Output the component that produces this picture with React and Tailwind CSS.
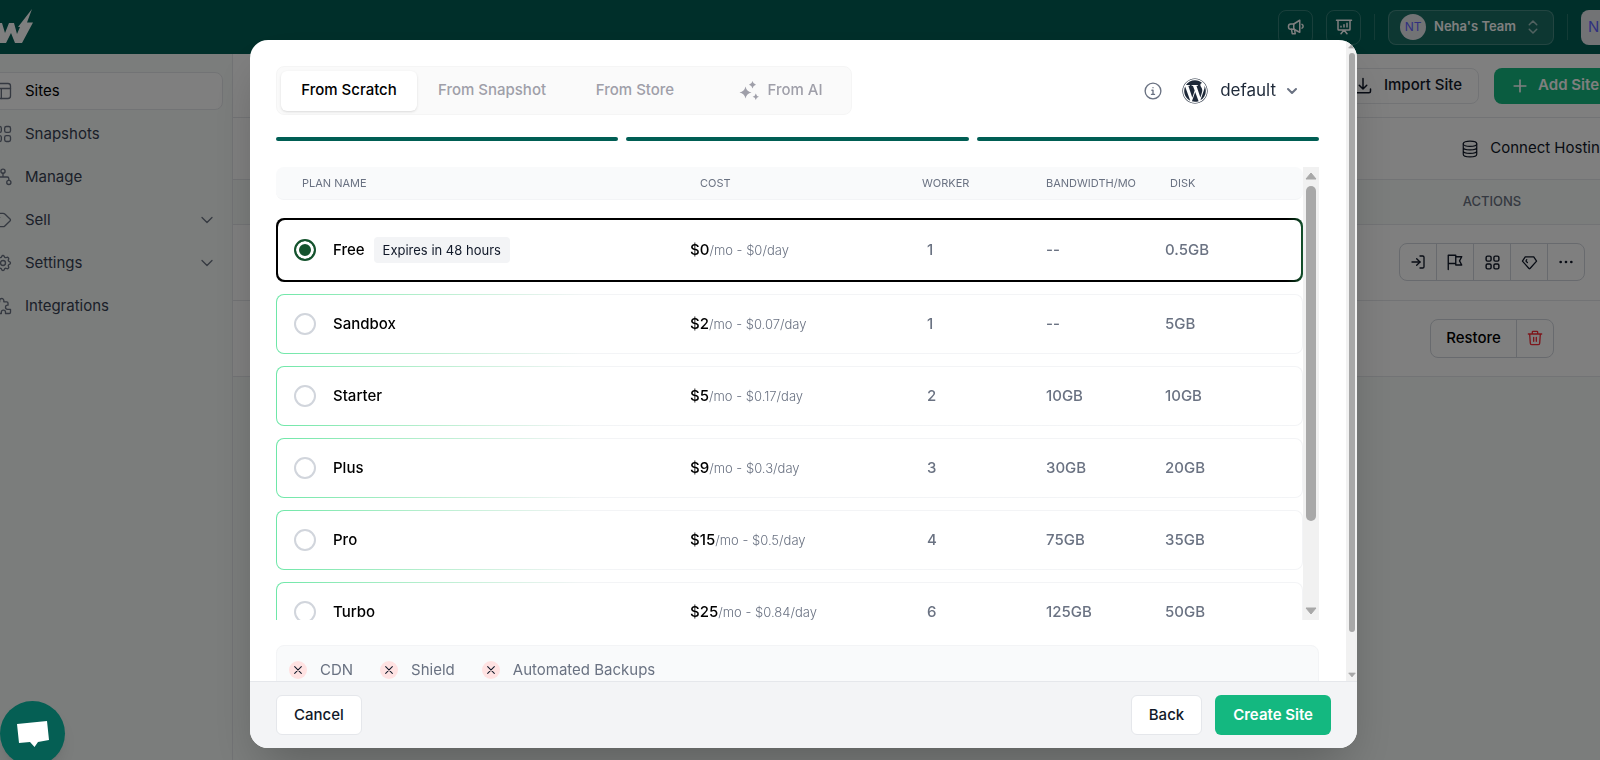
import React, { useState } from "react";
import { FaWordpress } from "react-icons/fa";
import { LuPlus, LuLogIn, LuChevronDown, LuChevronsUpDown } from "react-icons/lu";

const plans = [
  { name: "Free", note: "Expires in 48 hours", price: "$0", rest: "/mo - $0/day", worker: "1", bandwidth: "--", disk: "0.5GB" },
  { name: "Sandbox", price: "$2", rest: "/mo - $0.07/day", worker: "1", bandwidth: "--", disk: "5GB" },
  { name: "Starter", price: "$5", rest: "/mo - $0.17/day", worker: "2", bandwidth: "10GB", disk: "10GB" },
  { name: "Plus", price: "$9", rest: "/mo - $0.3/day", worker: "3", bandwidth: "30GB", disk: "20GB" },
  { name: "Pro", price: "$15", rest: "/mo - $0.5/day", worker: "4", bandwidth: "75GB", disk: "35GB" },
  { name: "Turbo", price: "$25", rest: "/mo - $0.84/day", worker: "6", bandwidth: "125GB", disk: "50GB" },
];

const Icon = ({ children, className = "size-5", width = 1.6 }) => (
  <svg
    className={`shrink-0 ${className}`}
    viewBox="0 0 24 24"
    fill="none"
    stroke="currentColor"
    strokeWidth={width}
    strokeLinecap="round"
    strokeLinejoin="round"
    aria-hidden="true"
  >
    {children}
  </svg>
);

const GridIcon = (props) => (
  <Icon {...props}>
    <rect x="3" y="3" width="7" height="7" rx="2" />
    <rect x="14" y="3" width="7" height="7" rx="2" />
    <rect x="3" y="14" width="7" height="7" rx="2" />
    <rect x="14" y="14" width="7" height="7" rx="2" />
  </Icon>
);

const navItems = [
  {
    label: "Sites",
    active: true,
    icon: (
      <Icon>
        <rect x="3" y="3" width="18" height="18" rx="3" />
        <path d="M3 9h18M10 9v12" />
      </Icon>
    ),
  },
  { label: "Snapshots", icon: <GridIcon /> },
  {
    label: "Manage",
    icon: (
      <Icon>
        <circle cx="12" cy="5" r="2.5" />
        <circle cx="5" cy="18.5" r="2.5" />
        <circle cx="19" cy="18.5" r="2.5" />
        <path d="M12 7.5v4.5M5 16v-2a2 2 0 0 1 2-2h10a2 2 0 0 1 2 2v2" />
      </Icon>
    ),
  },
  {
    label: "Sell",
    arrow: true,
    icon: (
      <Icon>
        <path d="M3 6v12a2 2 0 0 0 2 2h7a3 3 0 0 0 2.200-.900l6.200-5.800a1.800 1.800 0 0 0 0-2.600l-6.200-5.800A3 3 0 0 0 12 4H5a2 2 0 0 0-2 2z" />
        <path d="M8 9h.01" />
      </Icon>
    ),
  },
  {
    label: "Settings",
    arrow: true,
    icon: (
      <Icon>
        <path d="M10.300 4.300c.430-1.760 2.930-1.760 3.350 0a1.720 1.720 0 0 0 2.570 1.070c1.540-.940 3.310.820 2.370 2.370a1.720 1.720 0 0 0 1.070 2.570c1.760.430 1.760 2.930 0 3.350a1.720 1.720 0 0 0-1.070 2.570c.940 1.540-.820 3.310-2.370 2.370a1.720 1.720 0 0 0-2.570 1.070c-.430 1.760-2.930 1.760-3.350 0a1.720 1.720 0 0 0-2.570-1.070c-1.540.940-3.310-.820-2.370-2.370a1.720 1.720 0 0 0-1.070-2.570c-1.760-.430-1.760-2.930 0-3.350a1.720 1.720 0 0 0 1.070-2.570c-.940-1.540.820-3.310 2.370-2.370 1 .610 2.300.070 2.570-1.070z" />
        <circle cx="12" cy="12" r="3" />
      </Icon>
    ),
  },
  {
    label: "Integrations",
    icon: (
      <Icon>
        <path d="M8 5.500a2.500 2.500 0 0 1 5 0V7h3.500A1.500 1.500 0 0 1 18 8.500V11h-.500a2.500 2.500 0 0 0 0 5H21v3.500a1.500 1.500 0 0 1-1.500 1.500H15v-1.500a2.500 2.500 0 0 0-5 0V21H4.500A1.500 1.500 0 0 1 3 19.500V15h1.500a2.500 2.500 0 0 0 0-5H3V8.500A1.500 1.500 0 0 1 4.500 7H8z" />
      </Icon>
    ),
  },
];

const Header = () => (
  <header className="flex h-[54px] shrink-0 items-center justify-between bg-[#005e54]">
    <svg className="h-[54px] w-9" viewBox="0 0 36 54" aria-label="Logo">
      <path d="M-4 23H2L5 33L9 23H14L17 34L20 27H18L32 9L27 22.500H33L22 43H15L11 33L6 43H0L-8 25z" fill="#fff" />
    </svg>
    <div className="-mr-4 flex items-center">
      <button type="button" aria-label="Announcements" className="mr-[13px] flex size-[35px] items-center justify-center rounded-lg border border-white/20 text-white">
        <Icon className="size-[18px]" width={2}>
          <path d="M17 3v16L9 15H5a3 3 0 0 1-3-3v-1a3 3 0 0 1 3-3h4z" />
          <path d="M9 8v7M6 15l1 6h4l-1-6M20 8.500c2 1 2 4 0 5" />
        </Icon>
      </button>
      <button type="button" aria-label="Reports" className="flex size-[35px] items-center justify-center rounded-lg border border-white/20 text-white">
        <Icon className="size-[18px]" width={2}>
          <path d="M2 3h20M4 3v12a1 1 0 0 0 1 1h14a1 1 0 0 0 1-1V3M8 21l4-5 4 5M8 12v-1M12 12V9M16 12V7" />
        </Icon>
      </button>
      <span className="mx-[13px] h-[26px] w-px bg-white/15" />
      <button type="button" className="flex h-[35px] items-center rounded-lg border border-white/20 bg-white/10 px-[11px] text-[13px] font-semibold text-white">
        <span className="mr-2 flex size-[26px] items-center justify-center rounded-full bg-gray-200 text-[12px] font-normal text-indigo-500">NT</span>
        Neha&apos;s Team
        <LuChevronsUpDown className="ml-2 size-[18px] text-white/60" />
      </button>
      <span className="mx-[13px] h-[26px] w-px bg-white/15" />
      <span className="flex size-[35px] items-center justify-center rounded-lg bg-gray-200 text-[15px] text-indigo-500">NS</span>
    </div>
  </header>
);

const Sidebar = () => (
  <aside className="w-[233px] shrink-0 border-r border-gray-200 bg-[#f6faf8] pt-[18px] pr-[9px]">
    <nav className="-ml-5 flex flex-col gap-[5px]">
      {navItems.map((item) => (
        <a
          key={item.label}
          href="#"
          className={
            item.active
              ? "flex h-[38px] items-center gap-3 rounded-lg border border-gray-200 bg-white pr-[5px] pl-3 text-[15px] text-black"
              : "flex h-[38px] items-center gap-3 rounded-lg border border-transparent pr-[5px] pl-3 text-[15px] text-gray-700"
          }
        >
          <span className="text-gray-500">{item.icon}</span>
          <span className="flex-1">{item.label}</span>
          {item.arrow && <LuChevronDown className="size-5 text-gray-500" strokeWidth={1.5} />}
        </a>
      ))}
    </nav>
  </aside>
);

const actionIcons = [
  { label: "Login", icon: <LuLogIn className="size-4" /> },
  {
    label: "Flag",
    icon: (
      <Icon className="size-[18px]" width={1.8}>
        <path d="M3 22V3h10v11H3M13 5h8l-3 5.500 3 5.500h-8v-2" />
      </Icon>
    ),
  },
  { label: "Snapshots", icon: <GridIcon className="size-[17px]" width={2} /> },
  {
    label: "Plan",
    icon: (
      <Icon className="size-[17px]" width={1.8}>
        <path d="M6 4h12l4 6-9.300 10.500a1 1 0 0 1-1.400 0L2 10zM8 8l-1 2 2 2" />
      </Icon>
    ),
  },
  {
    label: "More",
    icon: (
      <Icon className="size-4" width={4}>
        <path d="M4 12h.01M12 12h.01M20 12h.01" />
      </Icon>
    ),
  },
];

const SitesPage = () => (
  <main className="min-w-0 flex-1 bg-[#f6faf8]">
    <div className="-mr-[15px] flex h-16 items-center justify-end gap-[15px] border-b border-gray-200 bg-white">
      <button type="button" className="flex h-9 items-center gap-3 rounded-lg border border-gray-200 px-4 text-[15px] font-medium text-gray-900">
        <Icon className="size-[18px]" width={2}>
          <path d="M12 2v14M7 11l5 5 5-5M2 16v3a2 2 0 0 0 2 2h16a2 2 0 0 0 2-2v-3" />
        </Icon>
        Import Site
      </button>
      <button type="button" className="flex h-9 items-center gap-2 rounded-lg bg-[#14b880] px-4 text-[15px] font-semibold text-white">
        <LuPlus className="size-5" />
        Add Site
      </button>
    </div>
    <div className="-mr-[9px] flex h-[62px] items-center justify-end border-b border-gray-200 bg-white">
      <button type="button" className="flex items-center gap-[11px] text-[15px] text-gray-900">
        <Icon className="size-[18px]">
          <ellipse cx="12" cy="5" rx="9" ry="3.5" />
          <path d="M3 5v14c0 2 4 3.500 9 3.500s9-1.500 9-3.500V5M3 9.700c0 2 4 3.500 9 3.500s9-1.500 9-3.500M3 14.300c0 2 4 3.500 9 3.500s9-1.500 9-3.500" />
        </Icon>
        Connect Hosting
      </button>
    </div>
    <table className="w-full border-collapse bg-white">
      <thead>
        <tr className="h-11 border-b border-gray-200 bg-[#f6faf8]">
          <th />
          <th className="w-[216px] text-center text-[13px] font-medium text-gray-500">ACTIONS</th>
        </tr>
      </thead>
      <tbody>
        <tr className="h-[76px] border-b border-gray-200">
          <td />
          <td>
            <div className="mx-auto flex h-[38px] w-[186px] divide-x divide-gray-300 rounded-lg border border-gray-300 text-gray-900">
              {actionIcons.map((a) => (
                <button key={a.label} type="button" aria-label={a.label} className="flex flex-1 items-center justify-center">
                  {a.icon}
                </button>
              ))}
            </div>
          </td>
        </tr>
        <tr className="h-[76px] border-b border-gray-200">
          <td />
          <td>
            <div className="mx-auto flex h-[39px] w-[124px] divide-x divide-gray-300 rounded-lg border border-gray-300">
              <button type="button" className="flex-1 text-[15px] font-medium text-black">Restore</button>
              <button type="button" aria-label="Delete" className="flex w-9 items-center justify-center text-red-500">
                <Icon className="size-4" width={2}>
                  <path d="M2 6h20M8 6V3a1 1 0 0 1 1-1h6a1 1 0 0 1 1 1v3M4 6l1 14a2 2 0 0 0 2 2h10a2 2 0 0 0 2-2l1-14M10 11v6M14 11v6" />
                </Icon>
              </button>
            </div>
          </td>
        </tr>
      </tbody>
    </table>
  </main>
);

const Tabs = () => {
  const [tab, setTab] = useState("From Scratch");
  const on = "flex h-10 items-center justify-center rounded-md bg-white text-[15px] font-medium text-black shadow";
  const off = "flex h-10 items-center justify-center rounded-md text-[15px] font-medium text-zinc-400";

  return (
    <div className="grid h-[49px] grid-cols-[136px_150px_136px_144px] items-center rounded-lg border border-neutral-100 bg-neutral-50 px-1">
      {["From Scratch", "From Snapshot", "From Store"].map((t) => (
        <button key={t} type="button" onClick={() => setTab(t)} className={t === tab ? on : off}>
          {t}
        </button>
      ))}
      <button type="button" onClick={() => setTab("From AI")} className={`${tab === "From AI" ? on : off} gap-2 pl-3`}>
        <svg className="size-5" viewBox="0 0 20 20" fill="currentColor" aria-hidden="true">
          <path d="M6.500 5.500q1 5 6 6q-5 1-6 6q-1-5-6-6q5-1 6-6zM13.500 0q.600 3 3.500 3.700q-2.900.700-3.500 3.700q-.600-3-3.500-3.700q2.900-.700 3.500-3.700zM16.800 12.500q.500 2.600 3.200 3.200q-2.700.600-3.200 3.200q-.500-2.600-3.200-3.200q2.700-.600 3.200-3.200z" />
        </svg>
        From AI
      </button>
    </div>
  );
};

const PlanRow = ({ plan, checked, onPick }) => (
  <div
    className={
      checked
        ? "shrink-0 rounded-lg bg-linear-to-r from-black from-98% to-[#14532d] p-[2px]"
        : "shrink-0 rounded-lg bg-linear-to-r from-[#6ee7a8] to-gray-100 to-30% p-px"
    }
  >
    <label
      className={`grid grid-cols-[396px_237px_119px_119px_1fr] items-center rounded-[7px] bg-white ${
        checked ? "h-[60px] pl-4" : "h-[58px] pl-[17px]"
      }`}
    >
      <span className="flex items-center">
        <input
          type="radio"
          name="plan"
          value={plan.name}
          checked={checked}
          onChange={onPick}
          className="mr-[17px] size-[22px] shrink-0 appearance-none rounded-full border-2 border-gray-300 checked:border-[#14532d] checked:bg-[#14532d] checked:shadow-[inset_0_0_0_3px_#fff]"
        />
        <span className="text-[15px] font-medium text-black">{plan.name}</span>
        {plan.note && (
          <span className="ml-[9px] rounded bg-gray-100 px-[9px] py-1 text-[13px] leading-[18px] text-gray-900">{plan.note}</span>
        )}
      </span>
      <span className="text-[15px] font-medium text-black">
        {plan.price}
        <span className="text-[13px] font-light text-gray-500">{plan.rest}</span>
      </span>
      <span className="text-[15px] font-medium text-gray-500">{plan.worker}</span>
      <span className="text-[15px] font-medium text-gray-500">{plan.bandwidth}</span>
      <span className="text-[15px] font-medium text-gray-500">{plan.disk}</span>
    </label>
  </div>
);

const Feature = ({ children }) => (
  <span className="flex items-center gap-[13px] text-[15px] text-gray-500">
    <span className="flex size-[18px] items-center justify-center rounded-full bg-red-100 text-gray-900">
      <Icon className="size-[10px]" width={2.5}>
        <path d="M4 4l16 16M20 4L4 20" />
      </Icon>
    </span>
    {children}
  </span>
);

const Arrow = ({ down, className }) => (
  <svg className={`shrink-0 text-[#a8a8a8] ${className}`} viewBox="0 0 12 8" fill="currentColor" stroke="currentColor" strokeLinejoin="round" aria-hidden="true">
    <path d={down ? "M1 1h10L6 7z" : "M1 7h10L6 1z"} />
  </svg>
);

const CreateSiteDialog = () => {
  const [picked, setPicked] = useState("Free");

  return (
    <div role="dialog" aria-label="Create Site" className="flex w-full flex-col overflow-hidden rounded-[18px] bg-white shadow-2xl">
      <div className="flex min-h-0 flex-1">
        <div className="flex min-w-0 flex-1 flex-col overflow-hidden pt-[26px] pr-[27px] pl-[26px]">
          <div className="flex shrink-0 items-center justify-between pr-[19px]">
            <Tabs />
            <div className="flex items-center">
              <Icon className="mr-5 size-[18px] text-gray-500" width={1.8}>
                <circle cx="12" cy="12" r="10.5" />
                <path d="M10.500 11H12v5.500M10 16.500h4M12 7.500h.01" />
              </Icon>
              <FaWordpress className="mr-3 size-[26px] text-gray-800" />
              <button type="button" className="flex items-center gap-2 text-[17px] text-gray-800">
                default
                <LuChevronDown className="size-4 text-gray-500" strokeWidth={3} />
              </button>
            </div>
          </div>

          <div className="mt-[22px] grid shrink-0 grid-cols-3 gap-2">
            <span className="h-1 rounded-full bg-[#005e54]" />
            <span className="h-1 rounded-full bg-[#005e54]" />
            <span className="h-1 rounded-full bg-[#005e54]" />
          </div>

          <div className="mt-[26px] flex h-[453px] shrink-0">
            <div className="flex min-w-0 flex-1 flex-col gap-3 overflow-hidden">
              <div className="mb-[6px] grid h-[33px] shrink-0 grid-cols-[398px_222px_124px_124px_1fr] items-center rounded-lg border-b border-gray-100 bg-gray-50 pl-[26px] text-[11px] text-gray-500">
                <span>PLAN NAME</span>
                <span>COST</span>
                <span>WORKER</span>
                <span>BANDWIDTH/MO</span>
                <span>DISK</span>
              </div>
              {plans.map((p) => (
                <PlanRow key={p.name} plan={p} checked={p.name === picked} onPick={() => setPicked(p.name)} />
              ))}
            </div>
            <div className="flex w-4 shrink-0 flex-col items-center bg-[#f1f1f1] py-[5px]">
              <Arrow className="h-2 w-3" />
              <span className="mt-[6px] h-[335px] w-[10px] rounded-full bg-[#a8a8a8]" />
              <Arrow down className="mt-auto h-2 w-3" />
            </div>
          </div>

          <div className="mt-[25px] flex shrink-0 gap-[27px] rounded-lg border border-gray-100 bg-gray-50 px-3 py-[13px]">
            <Feature>CDN</Feature>
            <Feature>Shield</Feature>
            <Feature>Automated Backups</Feature>
          </div>
        </div>
        <div className="flex w-[11px] shrink-0 flex-col items-center bg-[#f1f1f1] py-[3px]">
          <Arrow className="h-[6px] w-2" />
          <span className="mt-1 h-[579px] w-[6px] rounded-full bg-[#a8a8a8]" />
          <Arrow down className="mt-auto h-[6px] w-2" />
        </div>
      </div>

      <div className="flex h-[67px] shrink-0 items-center gap-[13px] border-t border-gray-200 bg-gray-100 px-[26px]">
        <button type="button" className="mr-auto h-10 rounded-md border border-gray-200 bg-white px-[17px] text-[15px] font-medium text-gray-900">
          Cancel
        </button>
        <button type="button" className="h-10 rounded-md border border-gray-200 bg-white px-[17px] text-[15px] font-medium text-gray-900">
          Back
        </button>
        <button type="button" className="h-10 rounded-md bg-[#14b880] px-[18px] text-[15px] font-semibold text-white">
          Create Site
        </button>
      </div>
    </div>
  );
};

const App = () => {
  return (
    <div className="flex h-screen flex-col overflow-hidden font-['Inter',sans-serif]">
      <Header />
      <div className="flex min-h-0 flex-1">
        <Sidebar />
        <SitesPage />
      </div>

      <div className="fixed inset-0 flex bg-black/50 pt-10 pr-[243px] pb-3 pl-[250px]">
        <CreateSiteDialog />
      </div>

      <button
        type="button"
        aria-label="Open chat"
        className="fixed -bottom-[6px] left-0 flex size-[65px] items-center justify-center rounded-full bg-[#055f54] shadow-lg"
      >
        <svg className="h-[26px] w-8" viewBox="0 0 32 26" fill="#fff" aria-hidden="true">
          <path d="M0 3L30 0L32 19L21 21L17.500 26L13 21L2 22z" />
        </svg>
      </button>
    </div>
  );
};

export default App;
